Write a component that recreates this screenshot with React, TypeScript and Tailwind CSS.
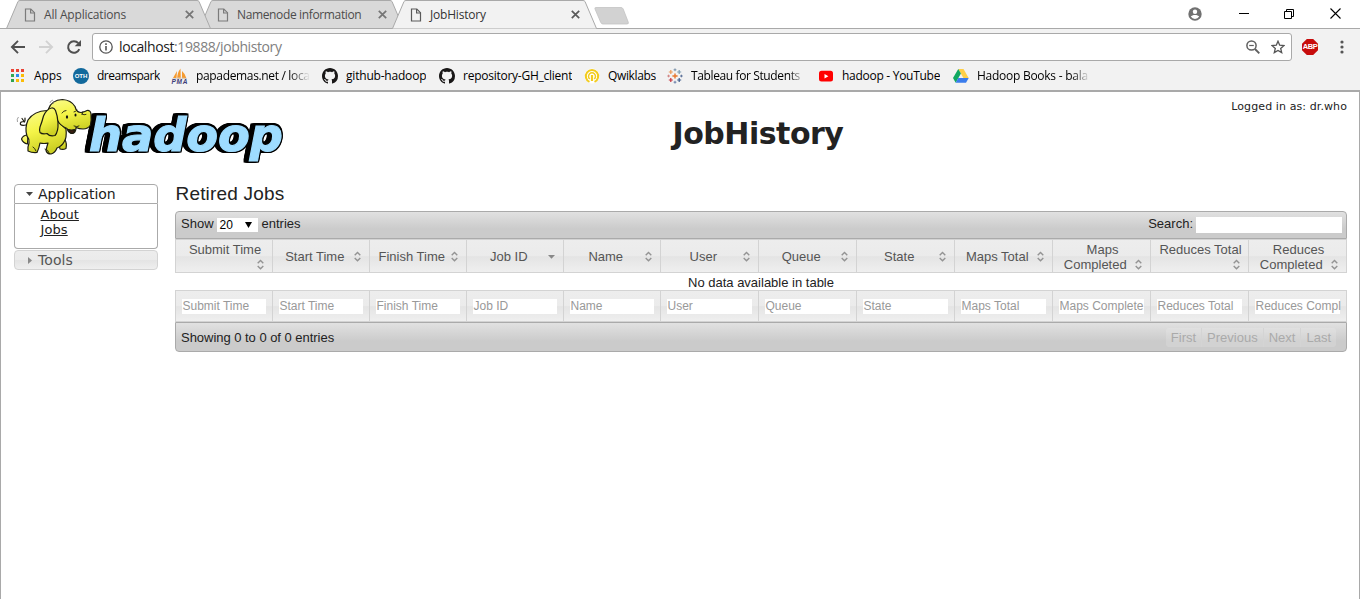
import type { ReactNode } from "react";

const UI = "font-['Open_Sans','Noto_Sans',sans-serif]";
const VERDANA = "font-['DejaVu_Sans',sans-serif]";
const ARIAL = "font-['Liberation_Sans',Arial,sans-serif]";

/* ---------- browser chrome ---------- */

function Tab({ title, active, className, spacing }: { title: string; active?: boolean; className: string; spacing: string }) {
  return (
    <div className={`relative flex h-[29px] w-[206px] shrink-0 items-center pr-[16px] pl-[18px] ${className}`}>
      <svg className="absolute inset-0" width="206" height="29" viewBox="0 0 206 29">
        <path d="M0.5 28.5 L12 1.5 Q12.6 0.5 14 0.5 H191 Q192.4 0.5 193 1.5 L204.5 28.5 Z" fill={active ? "#f2f2f2" : "#d9d9d9"} />
        <path d="M0.5 28.5 L12 1.5 Q12.6 0.5 14 0.5 H191 Q192.4 0.5 193 1.5 L204.5 28.5" fill="none" stroke="#a9a9a9" />
        {!active && <path d="M0 28.5H206" stroke="#a9a9a9" />}
      </svg>
      <svg className="relative" width="12" height="14" viewBox="0 0 12 14" fill="none" stroke={active ? "#5a5a5a" : "#7b7b7b"} strokeWidth="1.2">
        <path d="M1.5 1h5.3l3.7 3.7V13h-9z" />
        <path d="M6.6 1v4h3.9" />
      </svg>
      <span className={`relative ml-[8px] flex-1 text-[12px] whitespace-nowrap ${spacing} ${active ? "text-[#333]" : "text-[#4c4c4c]"}`}>{title}</span>
      <svg className="relative mr-[2.5px]" width="9" height="9" viewBox="0 0 9 9" stroke={active ? "#5a5a5a" : "#757575"} strokeWidth="1.7">
        <path d="M0.8 0.8l7.4 7.4M8.2 0.8L0.8 8.2" />
      </svg>
    </div>
  );
}

function TabStrip() {
  return (
    <div className="relative flex h-[29px] items-start bg-white pl-[6px] shadow-[inset_0_-1px_0_#a9a9a9]">
      <Tab title="All Applications" className="z-[2]" spacing="tracking-[-0.2px]" />
      <Tab title="Namenode information" className="z-[1] -ml-[13px]" spacing="tracking-[-0.36px]" />
      <Tab title="JobHistory" active className="z-[3] -ml-[13px]" spacing="tracking-[-0.2px]" />
      <svg className="mt-[6px] -ml-[5px]" width="37" height="20" viewBox="0 0 37 20">
        <path d="M3 1.5h25q1.5 0 2.200 1.500l5 13q.8 2-1.200 2H10q-1.500 0-2.200-1.500L2 3q-.6-1.500 1-1.500z" fill="#d2d2d2" stroke="#c3c3c3" strokeWidth=".8" />
      </svg>
      <div className="ml-auto flex h-[27px] items-center">
        <svg className="mr-[37px]" width="14" height="14" viewBox="0 0 14 14">
          <circle cx="7" cy="7" r="6.7" fill="#717171" />
          <circle cx="7" cy="4.700" r="2.200" fill="#fff" />
          <path d="M2.800 9.600c1.200-2.300 7.200-2.300 8.400 0a5 5 0 0 1-8.400 0z" fill="#fff" />
        </svg>
        <svg className="mr-[35px]" width="10" height="11" viewBox="0 0 10 11"><path d="M0 5.500h10" stroke="#000" /></svg>
        <svg className="mr-[36px]" width="10" height="10" viewBox="0 0 10 10" fill="none" stroke="#000">
          <path d="M.5 2.500h7v7h-7zM2.500 2.500v-2h7v7h-2" />
        </svg>
        <svg className="mr-[19px]" width="11" height="11" viewBox="0 0 11 11" stroke="#000" strokeWidth="1.100"><path d="M.5.5l10 10M10.500.5l-10 10" /></svg>
      </div>
    </div>
  );
}

function Toolbar() {
  return (
    <div className="flex h-[32px] items-center pt-[4px]">
      <svg className="ml-[10px]" width="16" height="14" viewBox="0 0 16 14" fill="none" stroke="#505050" strokeWidth="1.900"><path d="M15 7H2M8 .9L1.900 7 8 13.100" /></svg>
      <svg className="ml-[13px]" width="15" height="14" viewBox="0 0 15 14" fill="none" stroke="#d2d2d2" strokeWidth="1.900"><path d="M0 7h13M7 .9L13.100 7 7 13.100" /></svg>
      <svg className="ml-[12px]" width="16" height="16" viewBox="0 0 16 16">
        <path d="M13.300 10.200A5.800 5.800 0 1 1 12.300 4.200" fill="none" stroke="#505050" strokeWidth="2" />
        <path d="M15 1v6.300H8.700z" fill="#505050" />
      </svg>
      <div className="ml-[10px] flex h-[28px] w-[1200px] items-center rounded-[3px] border border-[#a9a9a9] bg-white">
        <svg className="ml-[6px]" width="14" height="14" viewBox="0 0 14 14" fill="none" stroke="#555">
          <circle cx="7" cy="7" r="6.200" strokeWidth="1.300" />
          <path d="M7 6v4.500M7 3.300v1.700" strokeWidth="1.600" />
        </svg>
        <span className="ml-[6px] text-[14px] leading-[20px] tracking-[-0.4px] whitespace-nowrap text-[#1a1a1a]">
          localhost<span className="text-[#808080]">:19888/jobhistory</span>
        </span>
        <svg className="ml-auto" width="14" height="14" viewBox="0 0 14 14" fill="none" stroke="#5f5f5f" strokeWidth="1.500">
          <circle cx="5.500" cy="5.500" r="4.600" /><path d="M9 9l4.300 4.300" strokeWidth="1.900" /><path d="M3.200 5.500h4.600" strokeWidth="1.200" />
        </svg>
        <svg className="mr-[6px] ml-[11px]" width="14" height="14" viewBox="0 0 14 14">
          <path d="M7 1.200l1.700 4 4.300.4-3.300 2.800 1 4.200L7 10.400l-3.700 2.200 1-4.200L1 5.600l4.300-.4z" fill="none" stroke="#555" strokeWidth="1.300" />
        </svg>
      </div>
      <div className="ml-[10px] flex size-[16px] items-center justify-center bg-[#c70d0d] [clip-path:polygon(30%_0,70%_0,100%_30%,100%_70%,70%_100%,30%_100%,0_70%,0_30%)]">
        <span className="font-['Liberation_Sans',sans-serif] text-[7.5px] leading-none font-bold tracking-[-0.4px] text-white">ABP</span>
      </div>
      <svg className="ml-[22px]" width="4" height="14" viewBox="0 0 4 14" fill="#555"><circle cx="2" cy="2" r="1.600" /><circle cx="2" cy="7" r="1.600" /><circle cx="2" cy="12" r="1.600" /></svg>
    </div>
  );
}

function AppsIcon() {
  const colors = ["#ea4335", "#ea4335", "#ea4335", "#34a853", "#2d8cf0", "#fbbc05", "#2ea24f", "#fbbc05", "#fbbc05"];
  return (
    <svg width="16" height="16" viewBox="0 0 16 16">
      {colors.map((c, i) => <rect key={i} x={2 + (i % 3) * 5} y={1 + Math.floor(i / 3) * 5} width="3" height="3" fill={c} />)}
    </svg>
  );
}

function OthIcon() {
  return (
    <span className="flex size-[16px] items-center justify-center rounded-full bg-[#12699c] font-['Liberation_Sans',sans-serif] text-[6px] leading-none font-bold text-white">OTH</span>
  );
}

function PmaIcon() {
  return (
    <svg className="shrink-0" width="17" height="16" viewBox="0 0 17 16">
      <path d="M6 3L2 10h3.500zM9.500 .5Q6 5 6.300 10.500h3.500zM11 3q3.500 3 4.500 7.500h-4.500z" fill="#f59a2f" />
      <path d="M1 11q7-2 15-.5" stroke="#c9c9c9" fill="none" strokeWidth=".8" />
      <text x="0.500" y="16" fontFamily="Liberation Sans" fontWeight="bold" fontStyle="italic" fontSize="6.500" textLength="16" fill="#3c3c78">PMA</text>
    </svg>
  );
}

function GithubIcon() {
  return (
    <svg width="16" height="16" viewBox="0 0 16 16" fill="#191717">
      <path d="M8 0C3.580 0 0 3.580 0 8c0 3.540 2.290 6.530 5.470 7.590.4.070.55-.17.55-.38 0-.19-.01-.82-.01-1.490-2.010.37-2.530-.49-2.690-.94-.09-.23-.48-.94-.82-1.130-.28-.15-.68-.52-.01-.53.63-.01 1.080.58 1.230.82.72 1.210 1.870.87 2.330.66.07-.52.28-.87.51-1.070-1.780-.2-3.640-.89-3.640-3.950 0-.87.31-1.590.82-2.150-.08-.2-.36-1.020.08-2.120 0 0 .67-.21 2.200.82.64-.18 1.320-.27 2-.27s1.360.09 2 .27c1.530-1.040 2.200-.82 2.200-.82.44 1.100.16 1.920.08 2.120.51.56.82 1.270.82 2.150 0 3.070-1.870 3.750-3.650 3.950.29.25.54.73.54 1.480 0 1.070-.01 1.930-.01 2.200 0 .21.15.46.55.38A8.010 8.010 0 0 0 16 8c0-4.420-3.580-8-8-8z" />
    </svg>
  );
}

function QwikIcon() {
  return (
    <svg width="16" height="16" viewBox="0 0 16 16" fill="none" stroke="#f2cb1d">
      <circle cx="8" cy="8" r="7.500" fill="#fff" stroke="none" />
      <path d="M5.500 13.800A6.200 6.200 0 1 1 10.500 13.800" strokeWidth="2" />
      <path d="M5.700 11A3.500 3.500 0 1 1 10.300 11" strokeWidth="1.500" />
      <path d="M8 7v6" strokeWidth="2.200" />
    </svg>
  );
}

function TableauIcon() {
  const plus = (x: number, y: number, r: number) => `M${x - r} ${y}h${2 * r}M${x} ${y - r}v${2 * r}`;
  return (
    <svg width="16" height="16" viewBox="0 0 16 16" fill="none">
      <path d={plus(8, 8, 2.6)} stroke="#e8762c" strokeWidth="1.400" />
      <path d={plus(3.8, 4, 2)} stroke="#eb9a58" strokeWidth="1.200" />
      <path d={plus(12.200, 4, 2)} stroke="#7c9cb0" strokeWidth="1.200" />
      <path d={plus(3.8, 12, 2)} stroke="#c8323c" strokeWidth="1.200" />
      <path d={plus(12.200, 12, 2)} stroke="#3c5a8c" strokeWidth="1.200" />
      <path d={plus(8, 1.800, 1.400)} stroke="#7890a8" />
      <path d={plus(8, 14.200, 1.400)} stroke="#6a7fa8" />
      <path d={plus(1.600, 8, 1.300)} stroke="#d08080" />
      <path d={plus(14.400, 8, 1.300)} stroke="#5a6f98" />
    </svg>
  );
}

function YoutubeIcon() {
  return (
    <svg width="16" height="16" viewBox="0 0 16 16"><rect x="1" y="2.800" width="14" height="10.800" rx="2.500" fill="#f00" /><path d="M6.500 6v4.400L10.400 8.200z" fill="#fff" /></svg>
  );
}

function DriveIcon() {
  return (
    <svg width="16" height="16" viewBox="0 0 16 16">
      <path d="M5.300 1h5.300l5.200 9H10.500z" fill="#ffcf48" />
      <path d="M5.300 1L8 5.600 2.700 14.700 0 10z" fill="#11a861" />
      <path d="M5.300 10h10.500l-2.700 4.700H2.700z" fill="#3a7cec" />
    </svg>
  );
}

function Bookmark({ icon, label, width, spacing, fade }: { icon: ReactNode; label: string; width: string; spacing: string; fade?: string }) {
  return (
    <div className={`flex shrink-0 items-center gap-[8px] ${width}`}>
      {icon}
      <span className={`overflow-hidden text-[12px] leading-[18px] whitespace-nowrap text-black ${spacing} ${fade ?? ""}`}>{label}</span>
    </div>
  );
}

function BookmarkBar() {
  return (
    <div className="flex h-[29px] items-center pl-[9px]">
      <Bookmark icon={<AppsIcon />} label="Apps" width="w-[64px] gap-[9px]" spacing="tracking-[-0.1px]" />
      <Bookmark icon={<OthIcon />} label="dreamspark" width="w-[98px]" spacing="tracking-[-0.5px]" />
      <Bookmark icon={<PmaIcon />} label="papademas.net / loca" width="w-[151px]" spacing="tracking-[-0.34px]" fade="w-[114px] [mask-image:linear-gradient(to_right,#000_82%,transparent)]" />
      <Bookmark icon={<GithubIcon />} label="github-hadoop" width="w-[117px]" spacing="tracking-[-0.2px]" />
      <Bookmark icon={<GithubIcon />} label="repository-GH_client" width="w-[145px]" spacing="tracking-[-0.25px]" />
      <Bookmark icon={<QwikIcon />} label="Qwiklabs" width="w-[83px]" spacing="tracking-[-0.35px]" />
      <Bookmark icon={<TableauIcon />} label="Tableau for Students" width="w-[151px]" spacing="tracking-[-0.38px]" fade="w-[114px] [mask-image:linear-gradient(to_right,#000_86%,transparent)]" />
      <Bookmark icon={<YoutubeIcon />} label="hadoop - YouTube" width="w-[135px]" spacing="tracking-[-0.28px]" />
      <Bookmark icon={<DriveIcon />} label="Hadoop Books - bala" width="w-[137px]" spacing="tracking-[-0.25px]" fade="w-[114px] [mask-image:linear-gradient(to_right,#000_84%,transparent)]" />
    </div>
  );
}

/* ---------- page ---------- */

function HadoopLogo() {
  return (
    <svg width="272" height="68" viewBox="14 96 272 68">
      <defs>
        <linearGradient id="hide" x1="0" y1="0" x2="0.300" y2="1">
          <stop offset="0" stopColor="#fafb8a" /><stop offset=".5" stopColor="#f4f448" /><stop offset="1" stopColor="#cdd024" />
        </linearGradient>
      </defs>
      <text
        className="[filter:drop-shadow(1.5px_0_0_#000)_drop-shadow(-1.5px_0_0_#000)_drop-shadow(0_1.2px_0_#000)_drop-shadow(0_-1.2px_0_#000)_drop-shadow(-2.5px_0_0_#000)]"
        x="89" y="151" fontFamily="DejaVu Sans" fontWeight="bold" fontStyle="oblique" fontSize="46.500"
        textLength="194" lengthAdjust="spacingAndGlyphs" fill="#9edcff" stroke="#9edcff" strokeWidth="1.200"
      >
        hadoop
      </text>
      <g fill="url(#hide)" stroke="#1c1c10" strokeWidth="1.200" strokeLinejoin="round" strokeLinecap="round">
        <path d="M26 125q-4 1-5.500-.5-1-3 3.500-3M22 118.500l2.500 3.500M25 118l0 3" fill="none" />
        <path d="M28 135q-5 0-6.500 4 1.500 4 6 5zM58 139l7 1q2 3 1 8.500-3 1.500-6 .5z" />
        <path d="M47 110.500Q34 111 28 120q-3.500 8-1 16 2.500 3 2 7-1.500 4-1 8 4 2 9 1.500 2-4 3-9.500 4 1 8 0-1 3-2 7.500 1 3.500 5 3.500 4-1 6-6 5-2 7-6 3-4 2-13z" />
        <path d="M48.500 109q3-9 14-9.500 8.500 .5 12.500 7 1.500 6 6 6 3.500-.5 6-2 3.500-.5 4 3.500 .5 6-.5 11-2.500 4-7.500 4-4 0-7-1.500 0 5.500-4 6-3.500-.5-5-5-7-3-9.500-8z" />
        <path d="M68.500 129.500q3 1 6 0 0 4-2.500 4-2.500-.5-3.500-4z" fill="#3a1c10" />
        <path d="M51.500 108q-5 1-8 8-1.500 6-3.500 11-1 4 0 5.500 2 2 7 1 3 3.500 8 2 3.500-4 3-13-.5-7-2.500-12-1.500-3-4-2.500z" />
        <path d="M62 113q1.500-2.500 4-2.500M74 112q1.500 0 3-2M74 126q3 1.500 5 0M49 152.500q-1-3-4-3.500M36 151q-1-3-3-4M82 114q2 1.500 4 .5M83 111.500l-1 3" fill="none" strokeWidth=".9" />
        <ellipse cx="67" cy="117" rx="1.100" ry="1.800" fill="#111" stroke="none" />
        <ellipse cx="75.500" cy="115" rx="1" ry="1.600" fill="#111" stroke="none" />
      </g>
      <path d="M17.500 122q-1-3 1-5M50 103q0-2 3-3M53 104l1-3" fill="none" stroke="#777" strokeWidth=".7" />
    </svg>
  );
}

function Sidebar() {
  return (
    <nav className={`mt-[19px] flex w-[144px] shrink-0 flex-col text-[14px] ${VERDANA}`}>
      <div className="flex h-[20px] items-center rounded-t-[4px] border border-[#aaa] bg-white pl-[11px] text-[#212121]">
        <svg width="7" height="4" viewBox="0 0 7 4"><path d="M0 0h7L3.500 4z" fill="#454545" /></svg>
        <span className="ml-[5px] tracking-[-0.05px]">Application</span>
      </div>
      <div className="flex h-[45px] flex-col rounded-b-[4px] border border-t-0 border-[#aaa] bg-white pt-[3px] pl-[25.5px] text-[13px] leading-[15px] text-[#212121]">
        <span className="underline">About</span>
        <span className="tracking-[0.1px] underline">Jobs</span>
      </div>
      <div className="mt-px flex h-[20px] items-center rounded-[4px] border border-[#d3d3d3] bg-[linear-gradient(#ededed_0,#ebebeb_50%,#e4e4e4_52%,#efefef_100%)] pl-[13px] text-[#555]">
        <svg width="4" height="7" viewBox="0 0 4 7"><path d="M0 0v7L4 3.500z" fill="#888" /></svg>
        <span className="ml-[6px] tracking-[0.1px]">Tools</span>
      </div>
    </nav>
  );
}

type Column = { lines: string[]; placeholder: string; sorted?: boolean; cell: string; input: string };

const NARROW = "w-[97px]";
const WIDE = "w-[98px]";

const columns: Column[] = [
  { lines: ["Submit Time", ""], placeholder: "Submit Time", cell: "w-[98px] border-l", input: "w-[84px]" },
  { lines: ["Start Time"], placeholder: "Start Time", cell: NARROW, input: "w-[84px]" },
  { lines: ["Finish Time"], placeholder: "Finish Time", cell: NARROW, input: "w-[84px]" },
  { lines: ["Job ID"], placeholder: "Job ID", sorted: true, cell: NARROW, input: "w-[84px]" },
  { lines: ["Name"], placeholder: "Name", cell: NARROW, input: "w-[84px]" },
  { lines: ["User"], placeholder: "User", cell: WIDE, input: "w-[85px]" },
  { lines: ["Queue"], placeholder: "Queue", cell: WIDE, input: "w-[85px]" },
  { lines: ["State"], placeholder: "State", cell: WIDE, input: "w-[85px]" },
  { lines: ["Maps Total"], placeholder: "Maps Total", cell: WIDE, input: "w-[85px]" },
  { lines: ["Maps", "Completed"], placeholder: "Maps Complete", cell: WIDE, input: "w-[85px]" },
  { lines: ["Reduces Total", ""], placeholder: "Reduces Total", cell: WIDE, input: "w-[85px]" },
  { lines: ["Reduces", "Completed"], placeholder: "Reduces Compl", cell: WIDE, input: "w-[85px]" },
];

function SortIcon({ sorted }: { sorted?: boolean }) {
  return (
    <svg className="shrink-0" width="16" height="15" viewBox="0 0 16 15">
      {sorted ? (
        <path d="M4 6h7L7.500 9.800z" fill="#888" />
      ) : (
        <path d="M4.700 6.300l2.800-2.800 2.800 2.800M4.700 9l2.800 2.800 2.800-2.800" fill="none" stroke="#939393" strokeWidth="1.400" />
      )}
    </svg>
  );
}

const GLASS = "bg-[linear-gradient(#ededed_0,#ebebeb_50%,#e4e4e4_52%,#efefef_100%)]";
const BAR = "bg-[linear-gradient(#e1e1e1_0,#cbcbcb_65%,#cbcbcb_100%)]";

function JobsTable() {
  return (
    <div className={`flex w-[1172px] flex-col text-[13px] text-[#222] ${ARIAL}`}>
      <div className={`flex h-[28px] items-center rounded-t-[4px] border border-[#aaa] pr-[4px] pl-[5px] ${BAR}`}>
        <span className="-mt-[2px]">Show</span>
        <span className="ml-[3px] flex h-[14px] w-[41px] items-center bg-white pl-[3px] text-[12px] text-black">
          <span>20</span>
          <svg className="ml-[12px]" width="7" height="6" viewBox="0 0 7 6"><path d="M0 0h7L3.500 6z" fill="#000" /></svg>
        </span>
        <span className="-mt-[2px] ml-[4px]">entries</span>
        <span className="-mt-[2px] ml-auto">Search:</span>
        <span className="ml-[3px] h-[16px] w-[146px] bg-white" />
      </div>
      <div className="flex text-[#555]">
        {columns.map((c) => (
          <div key={c.placeholder} className={`flex h-[34px] shrink-0 flex-col justify-center border-y border-r border-[#d3d3d3] pr-[3px] leading-[15px] whitespace-nowrap ${c.lines.length === 2 ? "pt-[2px]" : ""} ${c.cell} ${GLASS}`}>
            {c.lines.length === 2 && <span className="pl-[5px] text-center">{c.lines[0]}</span>}
            <div className="flex items-center pl-[6.5px]">
              <span className="flex-1 text-center">{c.lines[c.lines.length - 1]}</span>
              <SortIcon sorted={c.sorted} />
            </div>
          </div>
        ))}
      </div>
      <div className="h-[17px] text-center leading-[20px]">No data available in table</div>
      <div className="flex">
        {columns.map((c) => (
          <div key={c.placeholder} className={`flex h-[32px] shrink-0 items-center border-y border-r border-[#d3d3d3] pl-[6px] ${c.cell} ${GLASS}`}>
            <span className={`h-[15px] bg-white pl-[0.5px] text-[12px] leading-[14px] whitespace-nowrap text-[#999] ${c.input}`}>{c.placeholder}</span>
          </div>
        ))}
      </div>
      <div className={`flex h-[30px] items-center justify-between rounded-b-[4px] border border-[#aaa] pr-[10px] pl-[5px] ${BAR}`}>
        <span className="mt-[2px] tracking-[-0.03px]">Showing 0 to 0 of 0 entries</span>
        <div className="flex h-[19px] items-stretch divide-x divide-[#d4d4d4] rounded-[3px] bg-white/15 leading-[20px] text-[#aaa]">
          {["First", "Previous", "Next", "Last"].map((p) => (
            <span key={p} className="px-[5px]">{p}</span>
          ))}
        </div>
      </div>
    </div>
  );
}

export default function App() {
  return (
    <div className={`flex h-[599px] w-[1360px] flex-col overflow-hidden bg-[#f2f2f2] ${UI}`}>
      <TabStrip />
      <Toolbar />
      <BookmarkBar />
      <main className="flex flex-1 flex-col border-x border-t-2 border-[#a9a9a9] bg-white">
        <header className={`flex h-[73px] text-[#222] ${VERDANA}`}>
          <div className="w-[400px] pt-[4px] pl-[13px]"><HadoopLogo /></div>
          <h1 className="mr-auto w-[714px] pt-[23px] text-center text-[30px] leading-[38px] font-bold tracking-[-0.5px] text-[#222]">JobHistory</h1>
          <div className="pt-[8px] pr-[12px] text-[11px] leading-[14px] tracking-[0.1px] whitespace-nowrap">Logged in as: dr.who</div>
        </header>
        <div className="flex pl-[13px]">
          <Sidebar />
          <section className="ml-[17px] flex flex-col">
            <h2 className={`mt-[17px] mb-[6px] h-[23px] pl-[0.5px] text-[19px] leading-[23px] tracking-[0.18px] text-[#222] ${ARIAL}`}>Retired Jobs</h2>
            <JobsTable />
          </section>
        </div>
      </main>
    </div>
  );
}
